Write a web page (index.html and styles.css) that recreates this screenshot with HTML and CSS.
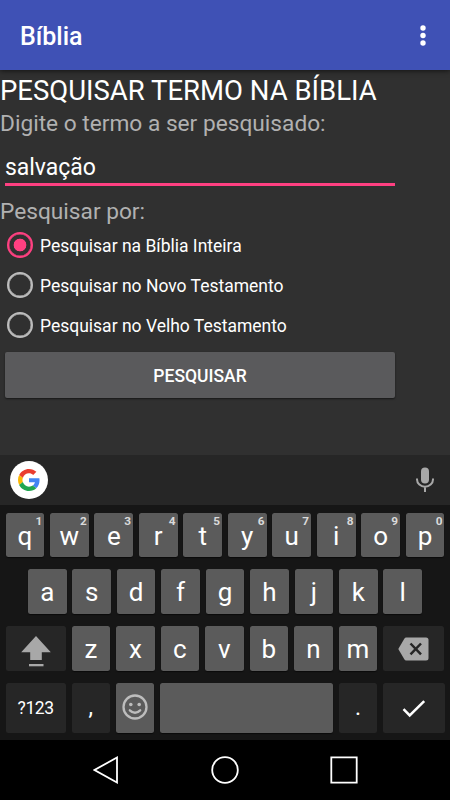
FILE: index.html
```html
<!DOCTYPE html>
<html lang="pt-BR">
<head>
<meta charset="utf-8">
<title>Bíblia</title>
<link rel="stylesheet" href="styles.css">
</head>
<body>
<header class="appbar">
  <h1>Bíblia</h1>
  <svg class="more" width="6" height="22" viewBox="0 0 6 22" fill="#fff"><circle cx="3" cy="3" r="2.7"/><circle cx="3" cy="10.5" r="2.7"/><circle cx="3" cy="18" r="2.7"/></svg>
</header>
<main>
  <h2>PESQUISAR TERMO NA BÍBLIA</h2>
  <p class="label">Digite o termo a ser pesquisado:</p>
  <div class="field">salvação</div>
  <p class="label by">Pesquisar por:</p>
  <div class="radio on"><span class="dot"></span><span>Pesquisar na Bíblia Inteira</span></div>
  <div class="radio"><span class="dot"></span><span>Pesquisar no Novo Testamento</span></div>
  <div class="radio"><span class="dot"></span><span>Pesquisar no Velho Testamento</span></div>
  <button class="search">PESQUISAR</button>
</main>
<section class="suggest">
  <span class="google"><svg width="22" height="22" viewBox="0 0 48 48"><path fill="#ea3d2f" d="M24 9.5c3.5 0 6.700 1.200 9.200 3.600l6.900-6.900C35.900 2.400 30.500 0 24 0 14.600 0 6.500 5.400 2.600 13.200l8 6.200C12.400 13.700 17.700 9.500 24 9.500z"/><path fill="#4285f4" d="M47 24.600c0-1.600-.2-3.100-.4-4.600H24v9h12.900c-.6 3-2.300 5.500-4.800 7.200l7.700 6C44.400 38 47 31.800 47 24.600z"/><path fill="#fbb605" d="M10.500 28.600c-.5-1.500-.8-3-.8-4.600s.3-3.100.8-4.600l-8-6.200C.9 16.500 0 20.100 0 24s.9 7.500 2.600 10.800z"/><path fill="#20a650" d="M24 48c6.500 0 11.900-2.100 15.900-5.800l-7.700-6c-2.200 1.500-4.900 2.300-8.200 2.300-6.300 0-11.600-4.200-13.500-9.900l-8 6.200C6.500 42.600 14.600 48 24 48z"/></svg></span>
  <svg class="mic" width="18" height="26" viewBox="0 0 18 26"><rect x="5" y=".5" width="8" height="16" rx="4" fill="#a8a8a8"/><path d="M1 11.500v1a8 7.200 0 0 0 16 0v-1M9 20v5" fill="none" stroke="#a8a8a8" stroke-width="2"/></svg>
</section>
<section class="keyboard">
  <div class="row r1">
    <div class="key">q<sup>1</sup></div><div class="key">w<sup>2</sup></div><div class="key">e<sup>3</sup></div><div class="key">r<sup>4</sup></div><div class="key">t<sup>5</sup></div><div class="key">y<sup>6</sup></div><div class="key">u<sup>7</sup></div><div class="key">i<sup>8</sup></div><div class="key">o<sup>9</sup></div><div class="key">p<sup>0</sup></div>
  </div>
  <div class="row r2">
    <div class="key">a</div><div class="key">s</div><div class="key">d</div><div class="key">f</div><div class="key">g</div><div class="key">h</div><div class="key">j</div><div class="key">k</div><div class="key">l</div>
  </div>
  <div class="row r3">
    <div class="key dark shift"><svg width="30" height="32" viewBox="0 0 30 32" fill="#a8a8a8"><path d="M15 0 29.800 16.300H20.800V24H9.200V16.300H.2z"/><path d="M8 28h14.500v2.300H8z"/></svg></div>
    <div class="key">z</div><div class="key">x</div><div class="key">c</div><div class="key">v</div><div class="key">b</div><div class="key">n</div><div class="key">m</div>
    <div class="key dark back"><svg width="31" height="24" viewBox="0 0 31 24"><path d="M8.300 .5H28q2.500 0 2.500 2.500v18q0 2.500-2.500 2.500H8.300q-1.300 0-2-1.200L.3 12 6.300 1.700Q7 .5 8.300 .5z" fill="#a8a8a8"/><path d="m12.500 6.500 10.500 10.800m0-10.800L12.500 17.300" stroke="#262626" stroke-width="2.500"/></svg></div>
  </div>
  <div class="row r4">
    <div class="key dark sym">?123</div>
    <div class="key dark stop">,</div>
    <div class="key smile"><svg width="26" height="26" viewBox="0 0 26 26" fill="none" stroke="#bdbdbd" stroke-width="2.300"><circle cx="13" cy="13" r="11.500"/><path d="M7.800 16.300q5.200 5 10.400 0" stroke-linecap="round"/><circle cx="8.800" cy="10.500" r="1.800" fill="#bdbdbd" stroke="none"/><circle cx="17.200" cy="10.500" r="1.800" fill="#bdbdbd" stroke="none"/></svg></div>
    <div class="key space"></div>
    <div class="key dark stop">.</div>
    <div class="key dark"><svg width="24" height="18" viewBox="0 0 24 18" fill="none" stroke="#fff" stroke-width="2.500"><path d="m1.500 9.200 6.200 6.200L22.200 1.200"/></svg></div>
  </div>
</section>
<nav class="navbar">
  <svg width="26" height="28" viewBox="0 0 26 28"><path d="M24 1.500v25L1.500 14z"/></svg>
  <svg width="28" height="28" viewBox="0 0 28 28"><circle cx="14" cy="14" r="12.800"/></svg>
  <svg width="28" height="28" viewBox="0 0 28 28"><path d="M1.300 1.300h25.400v25.400H1.300z"/></svg>
</nav>
</body>
</html>
```
FILE: styles.css
```css
* { box-sizing: border-box; margin: 0; }
body { width: 450px; height: 800px; overflow: hidden; display: flex; flex-direction: column; background: #303030; color: #fff; font-family: Roboto, sans-serif; }
svg { display: block; flex: none; }
.appbar { height: 70px; padding: 2px 24.500px 0 20px; flex: none; display: flex; align-items: center; justify-content: space-between; background: #3f51b5; box-shadow: 0 1px 5px #0009; }
.appbar h1 { font-size: 25px; font-weight: 500; }
main { height: 385px; flex: none; }
h2 { font-size: 27.500px; font-weight: 400; line-height: 34px; padding-top: 4px; white-space: nowrap; }
.label { font-size: 22.700px; line-height: 32px; height: 33px; color: #b1b1b1; white-space: nowrap; }
.field { width: 390px; height: 40px; margin: 5px 5px 0; padding-top: 3px; border-bottom: 3px solid #ff4081; font-size: 23px; line-height: 37px; letter-spacing: -.050px; }
.by { margin: 9px 0 -3px; padding-top: 1px; }
.radio { height: 40px; padding-left: 7px; display: flex; align-items: center; gap: 7px; font-size: 17.500px; }
.radio span:last-child { padding-top: 1px; }
.dot { width: 26px; height: 26px; border: 2.500px solid #bdbdbd; border-radius: 50%; flex: none; box-shadow: inset 0 0 0 .4px #bdbdbd; }
.on .dot { border-color: #ff4081; background: radial-gradient(circle, #ff4081 6px, transparent 6.700px); box-shadow: inset 0 0 0 .4px #ff4081; }
.search { display: block; width: 390px; height: 46px; margin: 7px 5px 0; padding: 2px 0 0; border: 0; border-radius: 2px; background: #5a5a5c; color: #fff; font: 500 17.500px Roboto, sans-serif; box-shadow: 0 1px 2px #0008; }
.suggest { height: 50px; flex: none; padding: 0 16px 0 10px; display: flex; align-items: center; justify-content: space-between; background: #262626; }
.google { width: 38px; height: 38px; border-radius: 50%; background: #fff; display: grid; place-items: center; }
.keyboard { height: 235px; flex: none; padding: 7.500px 5.500px 0; background: #161616; display: flex; flex-direction: column; gap: 12.300px; }
.row { display: grid; gap: 5.800px; height: 44.600px; }
.r1 { grid-template-columns: repeat(10, 1fr); }
.r2 { grid-template-columns: repeat(9, 1fr); padding: 0 22.500px; }
.r3 { grid-template-columns: 60.300px repeat(7, 1fr) 61.500px; }
.r4 { grid-template-columns: 60.300px 38.500px 38.500px 1fr 38.500px 61.500px; height: 50px; }
.key { position: relative; display: flex; align-items: center; justify-content: center; border-radius: 2.500px; background: #5b5b5b; box-shadow: 0 1px 1px #0008; font-size: 26px; line-height: 30px; padding-top: 1px; }
.r1 .key { padding-top: 3px; }
.dark { background: #262626; box-shadow: none; }
.shift { padding-top: 7px; }
.back { padding-top: 0; }
.smile { padding-bottom: 3px; }
.key.stop { font-size: 23px; padding-bottom: 1px; }
.key sup { position: absolute; top: 1px; right: 2px; font-size: 11.800px; line-height: 14px; font-weight: 700; color: #dadada; }
.sym { font-size: 17.500px; letter-spacing: -.400px; padding: 0; }
.navbar { height: 60px; flex: none; padding: 0 92px 0 93px; display: flex; align-items: center; justify-content: space-between; background: #000; }
.navbar svg { fill: none; stroke: #fff; stroke-width: 1.800; }
```
